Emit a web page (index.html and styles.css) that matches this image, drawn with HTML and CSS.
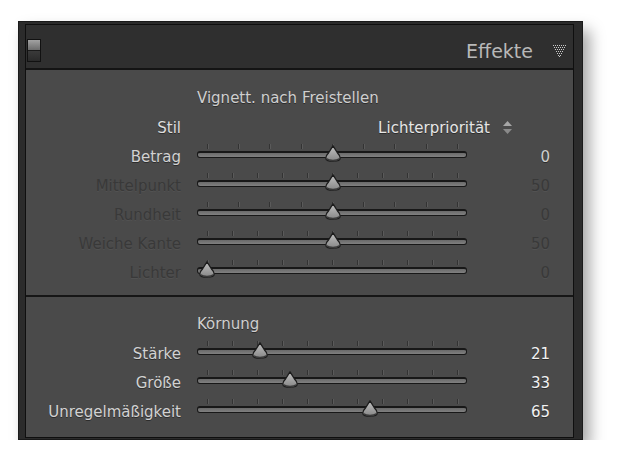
FILE: index.html
```html
<!DOCTYPE html>
<html lang="de">
<head>
    <meta charset="UTF-8">
    <meta name="viewport" content="width=device-width, initial-scale=1.0">
    <title>Effekte</title>
    <link rel="stylesheet" href="styles.css">
</head>
<body>
    <svg width="0" height="0" class="defs">
        <defs>
            <linearGradient id="griffverlauf" x1="0" y1="0" x2="0" y2="1">
                <stop offset="0" stop-color="#c2c2c2"/>
                <stop offset="1" stop-color="#868686"/>
            </linearGradient>
            <symbol id="griff" viewBox="0 0 16 17">
                <path d="M8 0.8 C9.5 3 11 5.5 12.5 8 C14.5 10 15.2 11.5 15.2 13 C15.2 15.5 12 16.2 8 16.2 C4 16.2 0.8 15.5 0.8 13 C0.8 11.5 1.5 10 3.5 8 C5 5.5 6.5 3 8 0.8 Z" fill="url(#griffverlauf)" stroke="#1c1c1c" stroke-width="1.3"/>
                <path d="M1.8 13.8 Q3.5 15.4 8 15.4 Q12.5 15.4 14.2 13.8" fill="none" stroke="#3a3a3a" stroke-width="1.4"/>
            </symbol>
        </defs>
    </svg>

    <div class="rahmen">
        <div class="innen">

            <!-- Kopfzeile des Bedienfelds -->
            <div class="kopf">
                <span class="schalter"></span>
                <span class="titel">Effekte</span>
                <svg class="menue" width="13" height="12" viewBox="0 0 13 12">
                    <g fill="#c8c8c8">
                        <rect x="0" y="0" width="1" height="1"/><rect x="2" y="0" width="1" height="1"/><rect x="4" y="0" width="1" height="1"/><rect x="6" y="0" width="1" height="1"/><rect x="8" y="0" width="1" height="1"/><rect x="10" y="0" width="1" height="1"/><rect x="12" y="0" width="1" height="1"/>
                        <rect x="1" y="2" width="1" height="1"/><rect x="3" y="2" width="1" height="1"/><rect x="5" y="2" width="1" height="1"/><rect x="7" y="2" width="1" height="1"/><rect x="9" y="2" width="1" height="1"/><rect x="11" y="2" width="1" height="1"/>
                        <rect x="2" y="4" width="1" height="1"/><rect x="4" y="4" width="1" height="1"/><rect x="6" y="4" width="1" height="1"/><rect x="8" y="4" width="1" height="1"/><rect x="10" y="4" width="1" height="1"/>
                        <rect x="3" y="6" width="1" height="1"/><rect x="5" y="6" width="1" height="1"/><rect x="7" y="6" width="1" height="1"/><rect x="9" y="6" width="1" height="1"/>
                        <rect x="4" y="8" width="1" height="1"/><rect x="6" y="8" width="1" height="1"/><rect x="8" y="8" width="1" height="1"/>
                        <rect x="5" y="10" width="1" height="1"/><rect x="7" y="10" width="1" height="1"/>
                        <rect x="6" y="11" width="1" height="1"/>
                    </g>
                </svg>
            </div>

            <div class="feld">
                <!-- Vignettierung -->
                <section class="gruppe">
                    <div class="gruppe-titel">Vignett. nach Freistellen</div>
                    <div class="zeile">
                        <span class="beschriftung hell">Stil</span>
                        <span class="auswahl">Lichterpriorität
                            <svg width="9" height="13" viewBox="0 0 9 13"><polygon points="4.5,0 9,5 0,5" fill="#a6a6a6"/><polygon points="0,8 9,8 4.5,13" fill="#8a8a8a"/></svg>
                        </span>
                    </div>
                    <div class="zeile">
                        <span class="beschriftung">Betrag</span>
                        <div class="regler"><div class="striche striche-8"></div><div class="spur"></div><svg class="griff" style="left: 128px"><use href="#griff"/></svg></div>
                        <span class="wert">0</span>
                    </div>
                    <div class="zeile aus">
                        <span class="beschriftung">Mittelpunkt</span>
                        <div class="regler"><div class="striche striche-10"></div><div class="spur"></div><svg class="griff" style="left: 128px"><use href="#griff"/></svg></div>
                        <span class="wert">50</span>
                    </div>
                    <div class="zeile aus">
                        <span class="beschriftung">Rundheit</span>
                        <div class="regler"><div class="striche striche-8"></div><div class="spur"></div><svg class="griff" style="left: 128px"><use href="#griff"/></svg></div>
                        <span class="wert">0</span>
                    </div>
                    <div class="zeile aus">
                        <span class="beschriftung">Weiche Kante</span>
                        <div class="regler"><div class="striche striche-10"></div><div class="spur"></div><svg class="griff" style="left: 128px"><use href="#griff"/></svg></div>
                        <span class="wert">50</span>
                    </div>
                    <div class="zeile aus">
                        <span class="beschriftung">Lichter</span>
                        <div class="regler"><div class="striche striche-10"></div><div class="spur"></div><svg class="griff" style="left: 2px"><use href="#griff"/></svg></div>
                        <span class="wert">0</span>
                    </div>
                </section>

                <!-- Körnung -->
                <section class="gruppe zweite">
                    <div class="gruppe-titel">Körnung</div>
                    <div class="zeile">
                        <span class="beschriftung">Stärke</span>
                        <div class="regler"><div class="striche striche-10"></div><div class="spur"></div><svg class="griff" style="left: 54.5px"><use href="#griff"/></svg></div>
                        <span class="wert weiss">21</span>
                    </div>
                    <div class="zeile">
                        <span class="beschriftung">Größe</span>
                        <div class="regler"><div class="striche striche-10"></div><div class="spur"></div><svg class="griff" style="left: 84.5px"><use href="#griff"/></svg></div>
                        <span class="wert weiss">33</span>
                    </div>
                    <div class="zeile">
                        <span class="beschriftung">Unregelmäßigkeit</span>
                        <div class="regler"><div class="striche striche-10"></div><div class="spur"></div><svg class="griff" style="left: 164.5px"><use href="#griff"/></svg></div>
                        <span class="wert weiss">65</span>
                    </div>
                </section>
            </div>
        </div>
    </div>
</body>
</html>
```

FILE: styles.css
```css
body {
    margin: 0;
    background-color: #ffffff;
    font-family: "DejaVu Sans", Verdana, sans-serif;
    font-size: 15px;
}

.defs {
    position: absolute;
}

.rahmen {
    box-sizing: border-box;
    width: 565px;
    height: 419px;
    margin: 21px 0 0 18px;
    padding: 2px 8px 3px 6px;
    background-color: #2b2b2b;
    border: 1px solid #1a1a1a;
    box-shadow: 7px 9px 14px rgba(0, 0, 0, 0.35);
}

.innen {
    height: 100%;
    border: 1px solid #0f0f0f;
    display: flex;
    flex-direction: column;
}

/* Kopfzeile */
.kopf {
    height: 45px;
    flex-shrink: 0;
    box-sizing: border-box;
    padding: 8px 7px 0 1px;
    display: flex;
    align-items: center;
    background-color: #2f2f2f;
    border-bottom: 2px solid #141414;
}

.schalter {
    box-sizing: border-box;
    width: 14px;
    height: 23px;
    border: 1px solid #111111;
    background: linear-gradient(to bottom, #a2a2a2 0, #6c6c6c 10px, #1a1a1a 10px, #1a1a1a 11px, #3a3a3a 11px, #2a2a2a 100%);
}

.titel {
    margin-left: auto;
    margin-right: 20px;
    font-size: 19px;
    color: #b8b8b8;
}

/* Inhalt */
.feld {
    flex: 1;
    background-color: #4a4a4a;
}

.gruppe {
    padding: 14px 0 8px;
}

.gruppe.zweite {
    padding: 13px 0 8px;
    border-top: 2px solid #161616;
}

.gruppe-titel {
    height: 29px;
    line-height: 29px;
    padding-left: 171px;
    color: #cfcfcf;
    text-shadow: 0 1px 0 #2c2c2c;
}

.zeile {
    height: 29px;
    display: flex;
    align-items: center;
}

.beschriftung {
    width: 155px;
    margin-right: 16px;
    text-align: right;
    color: #d2d2d2;
    text-shadow: 0 1px 0 #2c2c2c;
}

.beschriftung.hell {
    color: #dedede;
}

.auswahl {
    width: 353px;
    box-sizing: border-box;
    padding-right: 38px;
    display: flex;
    justify-content: flex-end;
    align-items: center;
    gap: 13px;
    color: #e6e6e6;
    text-shadow: 0 1px 0 #2c2c2c;
}

.regler {
    position: relative;
    width: 270px;
    height: 29px;
    box-sizing: border-box;
    padding-top: 2px;
}

.striche {
    width: 252px;
    height: 5px;
    margin: 0 0 2px 10px;
}

.striche-8 {
    background: repeating-linear-gradient(to right, #333333 0, #333333 1px, #5a5a5a 1px, #5a5a5a 2px, transparent 2px, transparent 31.25px);
}

.striche-10 {
    background: repeating-linear-gradient(to right, #333333 0, #333333 1px, #5a5a5a 1px, #5a5a5a 2px, transparent 2px, transparent 25px);
}

.spur {
    box-sizing: border-box;
    height: 7px;
    border: 1px solid #181818;
    border-top-width: 2px;
    border-radius: 3px;
    background: linear-gradient(to bottom, #6a6a6a, #808080);
}

.griff {
    position: absolute;
    top: 3px;
    width: 16px;
    height: 17px;
}

.wert {
    width: 83px;
    text-align: right;
    color: #cfcfcf;
    text-shadow: 0 1px 0 #2c2c2c;
}

.wert.weiss {
    color: #f2f2f2;
}

/* Deaktivierte Zeilen */
.aus .beschriftung,
.aus .wert {
    color: #393939;
    text-shadow: 0 1px 0 #525252;
}
```
